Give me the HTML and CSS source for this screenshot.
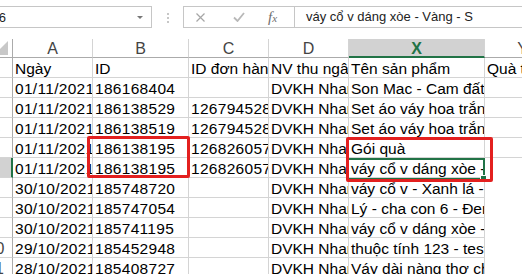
FILE: index.html
```html
<!DOCTYPE html>
<html lang="vi">
<head>
    <meta charset="UTF-8">
    <title>Danh sách đơn hàng</title>
    <link rel="stylesheet" href="styles.css">
</head>
<body>

    <div class="formula-bar">
        <div class="name-box">
            <span class="name">X6</span>
            <span class="caret"></span>
        </div>
        <svg class="grip" width="4" height="12" viewBox="0 0 4 12">
            <circle cx="2" cy="2" r="1"/>
            <circle cx="2" cy="6" r="1"/>
            <circle cx="2" cy="10" r="1"/>
        </svg>
        <div class="edit-box">
            <div class="edit-buttons">
                <svg class="cancel" width="9" height="9" viewBox="0 0 9 9">
                    <path d="M0.5 0.5 L8.5 8.5 M8.5 0.5 L0.5 8.5"/>
                </svg>
                <svg class="enter" width="12" height="10" viewBox="0 0 12 10">
                    <path d="M1 5.5 L4.5 9 L11 1"/>
                </svg>
                <span class="fx">f<span class="sub">x</span></span>
            </div>
            <div class="formula">váy cổ v dáng xòe - Vàng - S</div>
        </div>
    </div>

    <div class="sheet">
        <div class="row head">
            <div class="corner"><span class="tri"></span></div>
            <div class="col">A</div>
            <div class="col">B</div>
            <div class="col">C</div>
            <div class="col">D</div>
            <div class="col active">X</div>
            <div class="col">Y</div>
        </div>

        <div class="row">
            <div class="rh"><span>1</span></div>
            <div class="cell">Ngày</div>
            <div class="cell">ID</div>
            <div class="cell">ID đơn hàng</div>
            <div class="cell">NV thu ngân</div>
            <div class="cell">Tên sản phẩm</div>
            <div class="cell">Quà tặng</div>
        </div>
        <div class="row">
            <div class="rh"><span>2</span></div>
            <div class="cell num">01/11/2021</div>
            <div class="cell num">186168404</div>
            <div class="cell num"></div>
            <div class="cell">DVKH Nhanh</div>
            <div class="cell">Son Mac - Cam đất</div>
            <div class="cell"></div>
        </div>
        <div class="row">
            <div class="rh"><span>3</span></div>
            <div class="cell num">01/11/2021</div>
            <div class="cell num">186138529</div>
            <div class="cell num">126794528</div>
            <div class="cell">DVKH Nhanh</div>
            <div class="cell">Set áo váy hoa trắng</div>
            <div class="cell"></div>
        </div>
        <div class="row">
            <div class="rh"><span>4</span></div>
            <div class="cell num">01/11/2021</div>
            <div class="cell num">186138519</div>
            <div class="cell num">126794528</div>
            <div class="cell">DVKH Nhanh</div>
            <div class="cell">Set áo váy hoa trắng</div>
            <div class="cell"></div>
        </div>
        <div class="row">
            <div class="rh"><span>5</span></div>
            <div class="cell num">01/11/2021</div>
            <div class="cell num">186138195</div>
            <div class="cell num">126826057</div>
            <div class="cell">DVKH Nhanh</div>
            <div class="cell">Gói quà</div>
            <div class="cell"></div>
        </div>
        <div class="row">
            <div class="rh active"><span>6</span></div>
            <div class="cell num">01/11/2021</div>
            <div class="cell num">186138195</div>
            <div class="cell num">126826057</div>
            <div class="cell">DVKH Nhanh</div>
            <div class="cell">váy cổ v dáng xòe - Vàng - S</div>
            <div class="cell blank"></div>
        </div>
        <div class="row">
            <div class="rh"><span>7</span></div>
            <div class="cell num">30/10/2021</div>
            <div class="cell num">185748720</div>
            <div class="cell num"></div>
            <div class="cell">DVKH Nhanh</div>
            <div class="cell">váy cổ v - Xanh lá - M</div>
            <div class="cell blank"></div>
        </div>
        <div class="row">
            <div class="rh"><span>8</span></div>
            <div class="cell num">30/10/2021</div>
            <div class="cell num">185747054</div>
            <div class="cell num"></div>
            <div class="cell">DVKH Nhanh</div>
            <div class="cell">Lý - cha con 6 - Đen</div>
            <div class="cell blank"></div>
        </div>
        <div class="row">
            <div class="rh"><span>9</span></div>
            <div class="cell num">30/10/2021</div>
            <div class="cell num">185741195</div>
            <div class="cell num"></div>
            <div class="cell">DVKH Nhanh</div>
            <div class="cell">váy cổ v dáng xòe - Đỏ - M</div>
            <div class="cell blank"></div>
        </div>
        <div class="row">
            <div class="rh"><span>10</span></div>
            <div class="cell num">29/10/2021</div>
            <div class="cell num">185452948</div>
            <div class="cell num"></div>
            <div class="cell">DVKH Nhanh</div>
            <div class="cell">thuộc tính 123 - test</div>
            <div class="cell blank"></div>
        </div>
        <div class="row">
            <div class="rh"><span>11</span></div>
            <div class="cell num">28/10/2021</div>
            <div class="cell num">185408727</div>
            <div class="cell num"></div>
            <div class="cell">DVKH Nhanh</div>
            <div class="cell">Váy dài nàng thơ chiffon</div>
            <div class="cell blank"></div>
        </div>

        <!-- selected cell X6 -->
        <div class="selection"><span class="handle"></span></div>

        <!-- red highlight boxes -->
        <div class="mark mark-id"></div>
        <div class="mark mark-name"></div>
    </div>

</body>
</html>
```

FILE: styles.css
```css
* {
    margin: 0;
    padding: 0;
    box-sizing: border-box;
}

body {
    font-family: 'Liberation Sans', Arial, sans-serif;
    background-color: #ffffff;
    color: #000000;
    width: 522px;
    height: 274px;
    overflow: hidden;
}

/* Formula bar */
.formula-bar {
    display: flex;
    align-items: flex-start;
    height: 39px;
    padding-top: 6px;
    overflow: hidden;
}

.name-box {
    display: flex;
    align-items: center;
    flex-shrink: 0;
    width: 166px;
    height: 22px;
    margin-left: -14px;
    padding-left: 3px;
    border: 1px solid #c6c6c6;
    font-size: 13px;
    color: #222;
}

.name {
    flex: 1;
}

.caret {
    width: 0;
    height: 0;
    margin-right: 8px;
    border-left: 3px solid transparent;
    border-right: 3px solid transparent;
    border-top: 3px solid #777;
}

.grip {
    flex-shrink: 0;
    margin: 6px 0 0 14px;
    fill: #b4b4b4;
}

.edit-box {
    display: flex;
    flex: 1;
    height: 22px;
    margin-left: 13px;
    margin-right: -2px;
    border: 1px solid #c6c6c6;
}

.edit-buttons {
    display: flex;
    align-items: center;
    flex-shrink: 0;
    width: 110px;
}

.cancel {
    margin-left: 12px;
    fill: none;
    stroke: #a6a6a6;
    stroke-width: 1.2;
}

.enter {
    margin-left: 28px;
    fill: none;
    stroke: #b8b8b8;
    stroke-width: 1.8;
}

.fx {
    margin-left: 23px;
    font-family: 'Liberation Serif', serif;
    font-style: italic;
    font-size: 15px;
    color: #6e6e6e;
}

.fx .sub {
    font-size: 11px;
}

.formula {
    flex: 1;
    padding-left: 11px;
    border-left: 1px solid #c6c6c6;
    font-size: 13px;
    line-height: 20px;
    color: #222;
    white-space: nowrap;
    overflow: hidden;
}

/* Sheet grid */
.sheet {
    position: relative;
    overflow: hidden;
    height: 235px;
}

.row {
    display: grid;
    grid-template-columns: 13px 80px 96px 80px 80px 136px 76px;
    height: 20px;
}

.row.head {
    height: 19px;
}

.cell {
    height: 20px;
    padding: 2px 0 0 2px;
    border-right: 1px solid #d4d4d4;
    border-bottom: 1px solid #d4d4d4;
    font-size: 15.5px;
    line-height: 18px;
    white-space: nowrap;
    overflow: hidden;
}

/* digits render a little wider in the sheet font */
.cell.num {
    letter-spacing: 0.3px;
}

.cell.blank {
    border-bottom-color: #ffffff;
    border-right-color: #ffffff;
}

.rh {
    display: flex;
    justify-content: flex-end;
    height: 20px;
    padding-top: 2px;
    border-right: 1px solid #ababab;
    border-bottom: 1px solid #d4d4d4;
    font-size: 16px;
    line-height: 18px;
    color: #444;
    overflow: hidden;
}

.rh span {
    flex-shrink: 0;
    width: 33px;
    text-align: center;
}

.rh.active {
    background-color: #d2d2d2;
    border-right: 2px solid #217346;
}

.corner {
    display: flex;
    justify-content: flex-end;
    align-items: flex-end;
    padding: 0 4px 2px 0;
    border-right: 1px solid #ababab;
    border-bottom: 1px solid #ababab;
    overflow: hidden;
}

.tri {
    flex-shrink: 0;
    width: 0;
    height: 0;
    border-left: 14px solid transparent;
    border-bottom: 14px solid #c8c8c8;
}

.col {
    padding-top: 1px;
    border-right: 1px solid #d4d4d4;
    border-bottom: 1px solid #ababab;
    font-size: 16px;
    line-height: 17px;
    text-align: center;
    color: #444;
    white-space: nowrap;
    overflow: hidden;
}

.col.active {
    background-color: #d2d2d2;
    border-bottom: 2px solid #217346;
    color: #217346;
    font-weight: bold;
}

/* Selected cell */
.selection {
    position: absolute;
    left: 346px;
    top: 119px;
    width: 139px;
    height: 22px;
    border: 2px solid #217346;
}

.handle {
    position: absolute;
    right: -4px;
    bottom: -4px;
    width: 7px;
    height: 7px;
    background-color: #217346;
    border: 1px solid #ffffff;
}

/* Red highlight boxes */
.mark {
    position: absolute;
    border: 3px solid #e3201f;
    border-radius: 2px;
}

.mark-id {
    left: 87px;
    top: 97px;
    width: 103px;
    height: 42px;
}

.mark-name {
    left: 346px;
    top: 98px;
    width: 147px;
    height: 45px;
}
```
